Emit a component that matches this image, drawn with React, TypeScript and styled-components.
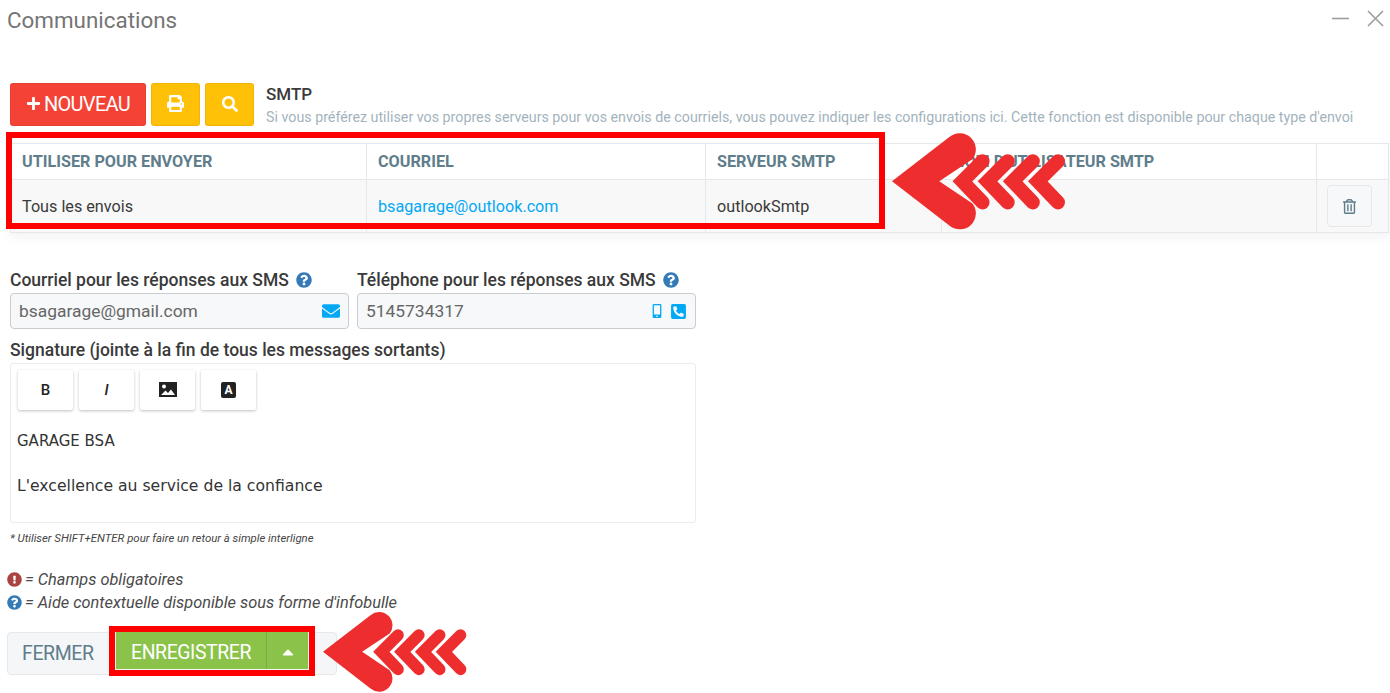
import * as React from 'react';
import styled, { createGlobalStyle } from 'styled-components';
import {
  FaCaretUp,
  FaEnvelope,
  FaExclamationCircle,
  FaMobileAlt,
  FaPhoneSquareAlt,
  FaPlus,
  FaPrint,
  FaQuestionCircle,
  FaRegTrashAlt,
  FaSearch,
} from 'react-icons/fa';

const GlobalStyle = createGlobalStyle`
  html, body {
    margin: 0;
    padding: 0;
    background: #ffffff;
    overflow: hidden;
  }
  * {
    box-sizing: border-box;
  }
`;

const Page = styled.div`
  position: relative;
  width: 1390px;
  height: 693px;
  overflow: hidden;
  font-family: Roboto, 'Liberation Sans', sans-serif;
  color: #3a3a3a;
`;
const Header = styled.div`
  height: 83px;
  padding: 7px 5px 0 7px;
  display: flex;
  justify-content: space-between;
  align-items: flex-start;
`;
const Title = styled.h1`
  margin: 0;
  font-size: 22.4px;
  line-height: 26px;
  font-weight: 400;
  color: #757575;
`;
const WindowButtons = styled.div`
  display: flex;
  gap: 16px;
  margin-top: 2px;
`;
const Toolbar = styled.div`
  display: flex;
  align-items: flex-start;
  padding-left: 10px;
  height: 60px;
`;
const ActionButton = styled.button<{ $bg: string; $wide?: boolean }>`
  width: ${(p) => (p.$wide ? '136px' : '49px')};
  height: 43px;
  margin-right: 5px;
  padding: 0 0 2px;
  border: 1px solid rgba(0, 0, 0, 0.06);
  border-radius: 3px;
  background: ${(p) => p.$bg};
  color: #ffffff;
  font-family: inherit;
  font-size: 20px;
  letter-spacing: -0.7px;
  display: flex;
  align-items: center;
  justify-content: center;
  gap: 3px;
`;
const Intro = styled.div`
  margin-left: 7px;
  padding-top: 1px;
`;
const IntroTitle = styled.div`
  font-size: 17px;
  line-height: 20px;
  font-weight: 500;
  color: #3a3a3a;
`;
const IntroText = styled.div`
  margin-top: 3px;
  font-size: 14.26px;
  line-height: 20px;
  color: #a3b3bd;
  white-space: nowrap;
`;
const Table = styled.table`
  width: 1378px;
  margin-left: 10px;
  border-collapse: collapse;
  table-layout: fixed;
  box-shadow: 0 5px 10px rgba(0, 0, 0, 0.05);
`;
const HeadCell = styled.th<{ $width: number }>`
  width: ${(p) => p.$width}px;
  height: 36px;
  padding: 0 11px;
  border: 1px solid #e5e8ea;
  text-align: left;
  font-size: 16.2px;
  font-weight: 700;
  color: #607d8b;
`;
const BodyRow = styled.tr`
  background: #f8f8f8;
`;
const Cell = styled.td`
  height: 53px;
  padding: 0 11px;
  border: 1px solid #e5e8ea;
  font-size: 16.2px;
  color: #3a3a3a;
`;
const MailLink = styled.span`
  color: #03a9f4;
`;
const TrashButton = styled.div`
  width: 45px;
  height: 42px;
  margin-left: -1px;
  border: 1px solid #e4e8eb;
  border-radius: 4px;
  background: #f7f8f9;
  color: #607d8b;
  display: flex;
  align-items: center;
  justify-content: center;
  font-size: 15px;
`;
const Form = styled.div`
  width: 686px;
  margin: 36px 0 0 10px;
`;
const FieldRow = styled.div`
  display: flex;
  gap: 8px;
`;
const Field = styled.div`
  width: 339px;
`;
const Label = styled.div`
  height: 24px;
  padding-bottom: 2px;
  font-size: 17.5px;
  line-height: 22px;
  font-weight: 500;
  color: #3a3a3a;
  display: flex;
  align-items: center;
  gap: 7px;
  white-space: nowrap;
`;
const HelpIcon = styled(FaQuestionCircle)`
  color: #337ab7;
  font-size: 16px;
`;
const InputBox = styled.div`
  height: 36px;
  padding: 0 8px;
  border: 1px solid #c9cdd0;
  border-radius: 4px;
  background: #f6f8fa;
  display: flex;
  align-items: center;
  justify-content: space-between;
  font-size: 17.4px;
  color: #666666;
`;
const InputIcons = styled.div`
  display: flex;
  align-items: center;
  gap: 6px;
  color: #03a9f4;
`;
const SignatureLabel = styled(Label)`
  margin-top: 9px;
  height: 25px;
`;
const Editor = styled.div`
  height: 160px;
  padding: 6px 7px 7px;
  border: 1px solid #ececec;
  border-radius: 3px;
`;
const EditorTools = styled.div`
  display: flex;
  gap: 6px;
`;
const ToolButton = styled.div<{ $italic?: boolean }>`
  width: 55px;
  height: 40px;
  border-radius: 2px;
  background: #ffffff;
  box-shadow: 0 1px 3px rgba(0, 0, 0, 0.25);
  color: #222222;
  display: flex;
  align-items: center;
  justify-content: center;
  font-size: 15px;
  font-weight: 500;
  font-style: ${(p) => (p.$italic ? 'italic' : 'normal')};
  font-family: Roboto, sans-serif;
`;
const LetterIcon = styled.span`
  width: 15px;
  height: 16px;
  border-radius: 2px;
  background: #222222;
  color: #ffffff;
  font-size: 12px;
  font-weight: 700;
  line-height: 16px;
  text-align: center;
`;
const EditorLine = styled.p<{ $first?: boolean }>`
  margin: ${(p) => (p.$first ? '20px' : '23px')} 0 0 -1px;
  font-family: 'DejaVu Sans', sans-serif;
  font-size: ${(p) => (p.$first ? '15px' : '15.65px')};
  line-height: 22px;
  color: #333333;
`;
const Footnote = styled.div`
  margin: 7px 0 0 0;
  font-size: 11.36px;
  line-height: 16px;
  font-style: italic;
  color: #444444;
`;
const Legend = styled.div`
  margin: 22px 0 0 7px;
`;
const LegendLine = styled.div`
  display: flex;
  align-items: center;
  gap: 3px;
  height: 23px;
  font-size: 16.35px;
  font-style: italic;
  color: #4a4a4a;
`;
const DangerIcon = styled(FaExclamationCircle)`
  color: #a94442;
  font-size: 15px;
`;
const LegendHelp = styled(FaQuestionCircle)`
  color: #337ab7;
  font-size: 15px;
`;
const Footer = styled.div`
  display: flex;
  margin: 18px 0 0 7px;
`;
const CloseButton = styled.div`
  width: 330px;
  height: 43px;
  padding-left: 14px;
  border: 1px solid #e6e9ec;
  border-radius: 4px;
  background: #f4f6f8;
  color: #607d8b;
  font-size: 19.5px;
  letter-spacing: -0.4px;
  display: flex;
  align-items: center;
`;
const SaveGroup = styled.div`
  position: absolute;
  left: 116px;
  top: 632px;
  width: 192px;
  height: 37px;
  padding-top: 3px;
  display: flex;
  background: #8bc34a;
  color: #ffffff;
`;
const SaveLabel = styled.div`
  width: 150px;
  font-size: 19.4px;
  letter-spacing: -0.4px;
  display: flex;
  align-items: center;
  justify-content: center;
`;
const SaveCaret = styled.div`
  flex: 1;
  margin-top: -3px;
  padding-top: 3px;
  border-left: 1px solid #6cb04f;
  display: flex;
  align-items: center;
  justify-content: center;
  font-size: 18px;
`;
const Highlight = styled.div<{ $x: number; $y: number; $w: number; $h: number; $border: number }>`
  position: absolute;
  left: ${(p) => p.$x}px;
  top: ${(p) => p.$y}px;
  width: ${(p) => p.$w}px;
  height: ${(p) => p.$h}px;
  border: ${(p) => p.$border}px solid #ff0000;
  pointer-events: none;
`;
const ArrowSvg = styled.svg<{ $x: number; $y: number; $w: number }>`
  position: absolute;
  left: ${(p) => p.$x}px;
  top: ${(p) => p.$y}px;
  width: ${(p) => p.$w}px;
  height: auto;
`;

const Arrow = ({ x, y, w }: { x: number; y: number; w: number }) => (
  <ArrowSvg $x={x} $y={y} $w={w} viewBox="0 0 174 98">
    <path d="M0 49 L57 5 A16 16 0 0 1 80 27 L47 49 L80 71 A16 16 0 0 1 57 93 Z" fill="#ee2e2e" />
    <g fill="none" stroke="#ee2e2e" strokeLinecap="round" strokeWidth="14">
      {[0, 25, 50, 75].map((dx) => (
        <path key={dx} d={`M${90 + dx} 29 L${70 + dx} 49 L${90 + dx} 70`} />
      ))}
    </g>
  </ArrowSvg>
);

const PictureIcon = () => (
  <svg width="18" height="16" viewBox="0 0 18 16">
    <rect width="18" height="15" fill="#222222" />
    <circle cx="5" cy="4.500" r="2" fill="#ffffff" />
    <path d="M2 13 L6.500 8.500 L9 11 L12 7.500 L16 13 Z" fill="#ffffff" />
  </svg>
);

const columns = [
  { label: 'UTILISER POUR ENVOYER', width: 356 },
  { label: 'COURRIEL', width: 339 },
  { label: 'SERVEUR SMTP', width: 236 },
  { label: "NOM D'UTILISATEUR SMTP", width: 375 },
  { label: '', width: 72 },
];

export default function App() {
  return (
    <Page>
      <GlobalStyle />
      <Header>
        <Title>Communications</Title>
        <WindowButtons>
          <svg width="19" height="19" viewBox="0 0 19 19">
            <path d="M1 9.500 H18" stroke="#9e9e9e" strokeWidth="1.600" />
          </svg>
          <svg width="19" height="19" viewBox="0 0 19 19">
            <path d="M2 2 L17 17 M17 2 L2 17" stroke="#9e9e9e" strokeWidth="1.600" />
          </svg>
        </WindowButtons>
      </Header>
      <Toolbar>
        <ActionButton $bg="#f44336" $wide>
          <FaPlus size={15} /> NOUVEAU
        </ActionButton>
        <ActionButton $bg="#ffc107">
          <FaPrint size={17} />
        </ActionButton>
        <ActionButton $bg="#ffc107">
          <FaSearch size={16} />
        </ActionButton>
        <Intro>
          <IntroTitle>SMTP</IntroTitle>
          <IntroText>
            Si vous préférez utiliser vos propres serveurs pour vos envois de courriels, vous pouvez indiquer les
            configurations ici. Cette fonction est disponible pour chaque type d'envoi
          </IntroText>
        </Intro>
      </Toolbar>
      <Table>
        <thead>
          <tr>
            {columns.map((col) => (
              <HeadCell key={col.label} $width={col.width}>
                {col.label}
              </HeadCell>
            ))}
          </tr>
        </thead>
        <tbody>
          <BodyRow>
            <Cell>Tous les envois</Cell>
            <Cell>
              <MailLink>bsagarage@outlook.com</MailLink>
            </Cell>
            <Cell>outlookSmtp</Cell>
            <Cell />
            <Cell>
              <TrashButton>
                <FaRegTrashAlt />
              </TrashButton>
            </Cell>
          </BodyRow>
        </tbody>
      </Table>
      <Form>
        <FieldRow>
          <Field>
            <Label>
              Courriel pour les réponses aux SMS <HelpIcon />
            </Label>
            <InputBox>
              bsagarage@gmail.com
              <InputIcons>
                <FaEnvelope size={18} />
              </InputIcons>
            </InputBox>
          </Field>
          <Field>
            <Label>
              Téléphone pour les réponses aux SMS <HelpIcon />
            </Label>
            <InputBox>
              5145734317
              <InputIcons>
                <FaMobileAlt size={14} />
                <FaPhoneSquareAlt size={17} />
              </InputIcons>
            </InputBox>
          </Field>
        </FieldRow>
        <SignatureLabel>Signature (jointe à la fin de tous les messages sortants)</SignatureLabel>
        <Editor>
          <EditorTools>
            <ToolButton>B</ToolButton>
            <ToolButton $italic>I</ToolButton>
            <ToolButton>
              <PictureIcon />
            </ToolButton>
            <ToolButton>
              <LetterIcon>A</LetterIcon>
            </ToolButton>
          </EditorTools>
          <EditorLine $first>GARAGE BSA</EditorLine>
          <EditorLine>L'excellence au service de la confiance</EditorLine>
        </Editor>
        <Footnote>* Utiliser SHIFT+ENTER pour faire un retour à simple interligne</Footnote>
      </Form>
      <Legend>
        <LegendLine>
          <DangerIcon /> = Champs obligatoires
        </LegendLine>
        <LegendLine>
          <LegendHelp /> = Aide contextuelle disponible sous forme d'infobulle
        </LegendLine>
      </Legend>
      <Footer>
        <CloseButton>FERMER</CloseButton>
      </Footer>
      <SaveGroup>
        <SaveLabel>ENREGISTRER</SaveLabel>
        <SaveCaret>
          <FaCaretUp />
        </SaveCaret>
      </SaveGroup>
      <Highlight $x={6} $y={132} $w={879} $h={97} $border={6} />
      <Highlight $x={109} $y={626} $w={206} $h={50} $border={6} />
      <Arrow x={892} y={132} w={175} />
      <Arrow x={323} y={611} w={145} />
    </Page>
  );
}
